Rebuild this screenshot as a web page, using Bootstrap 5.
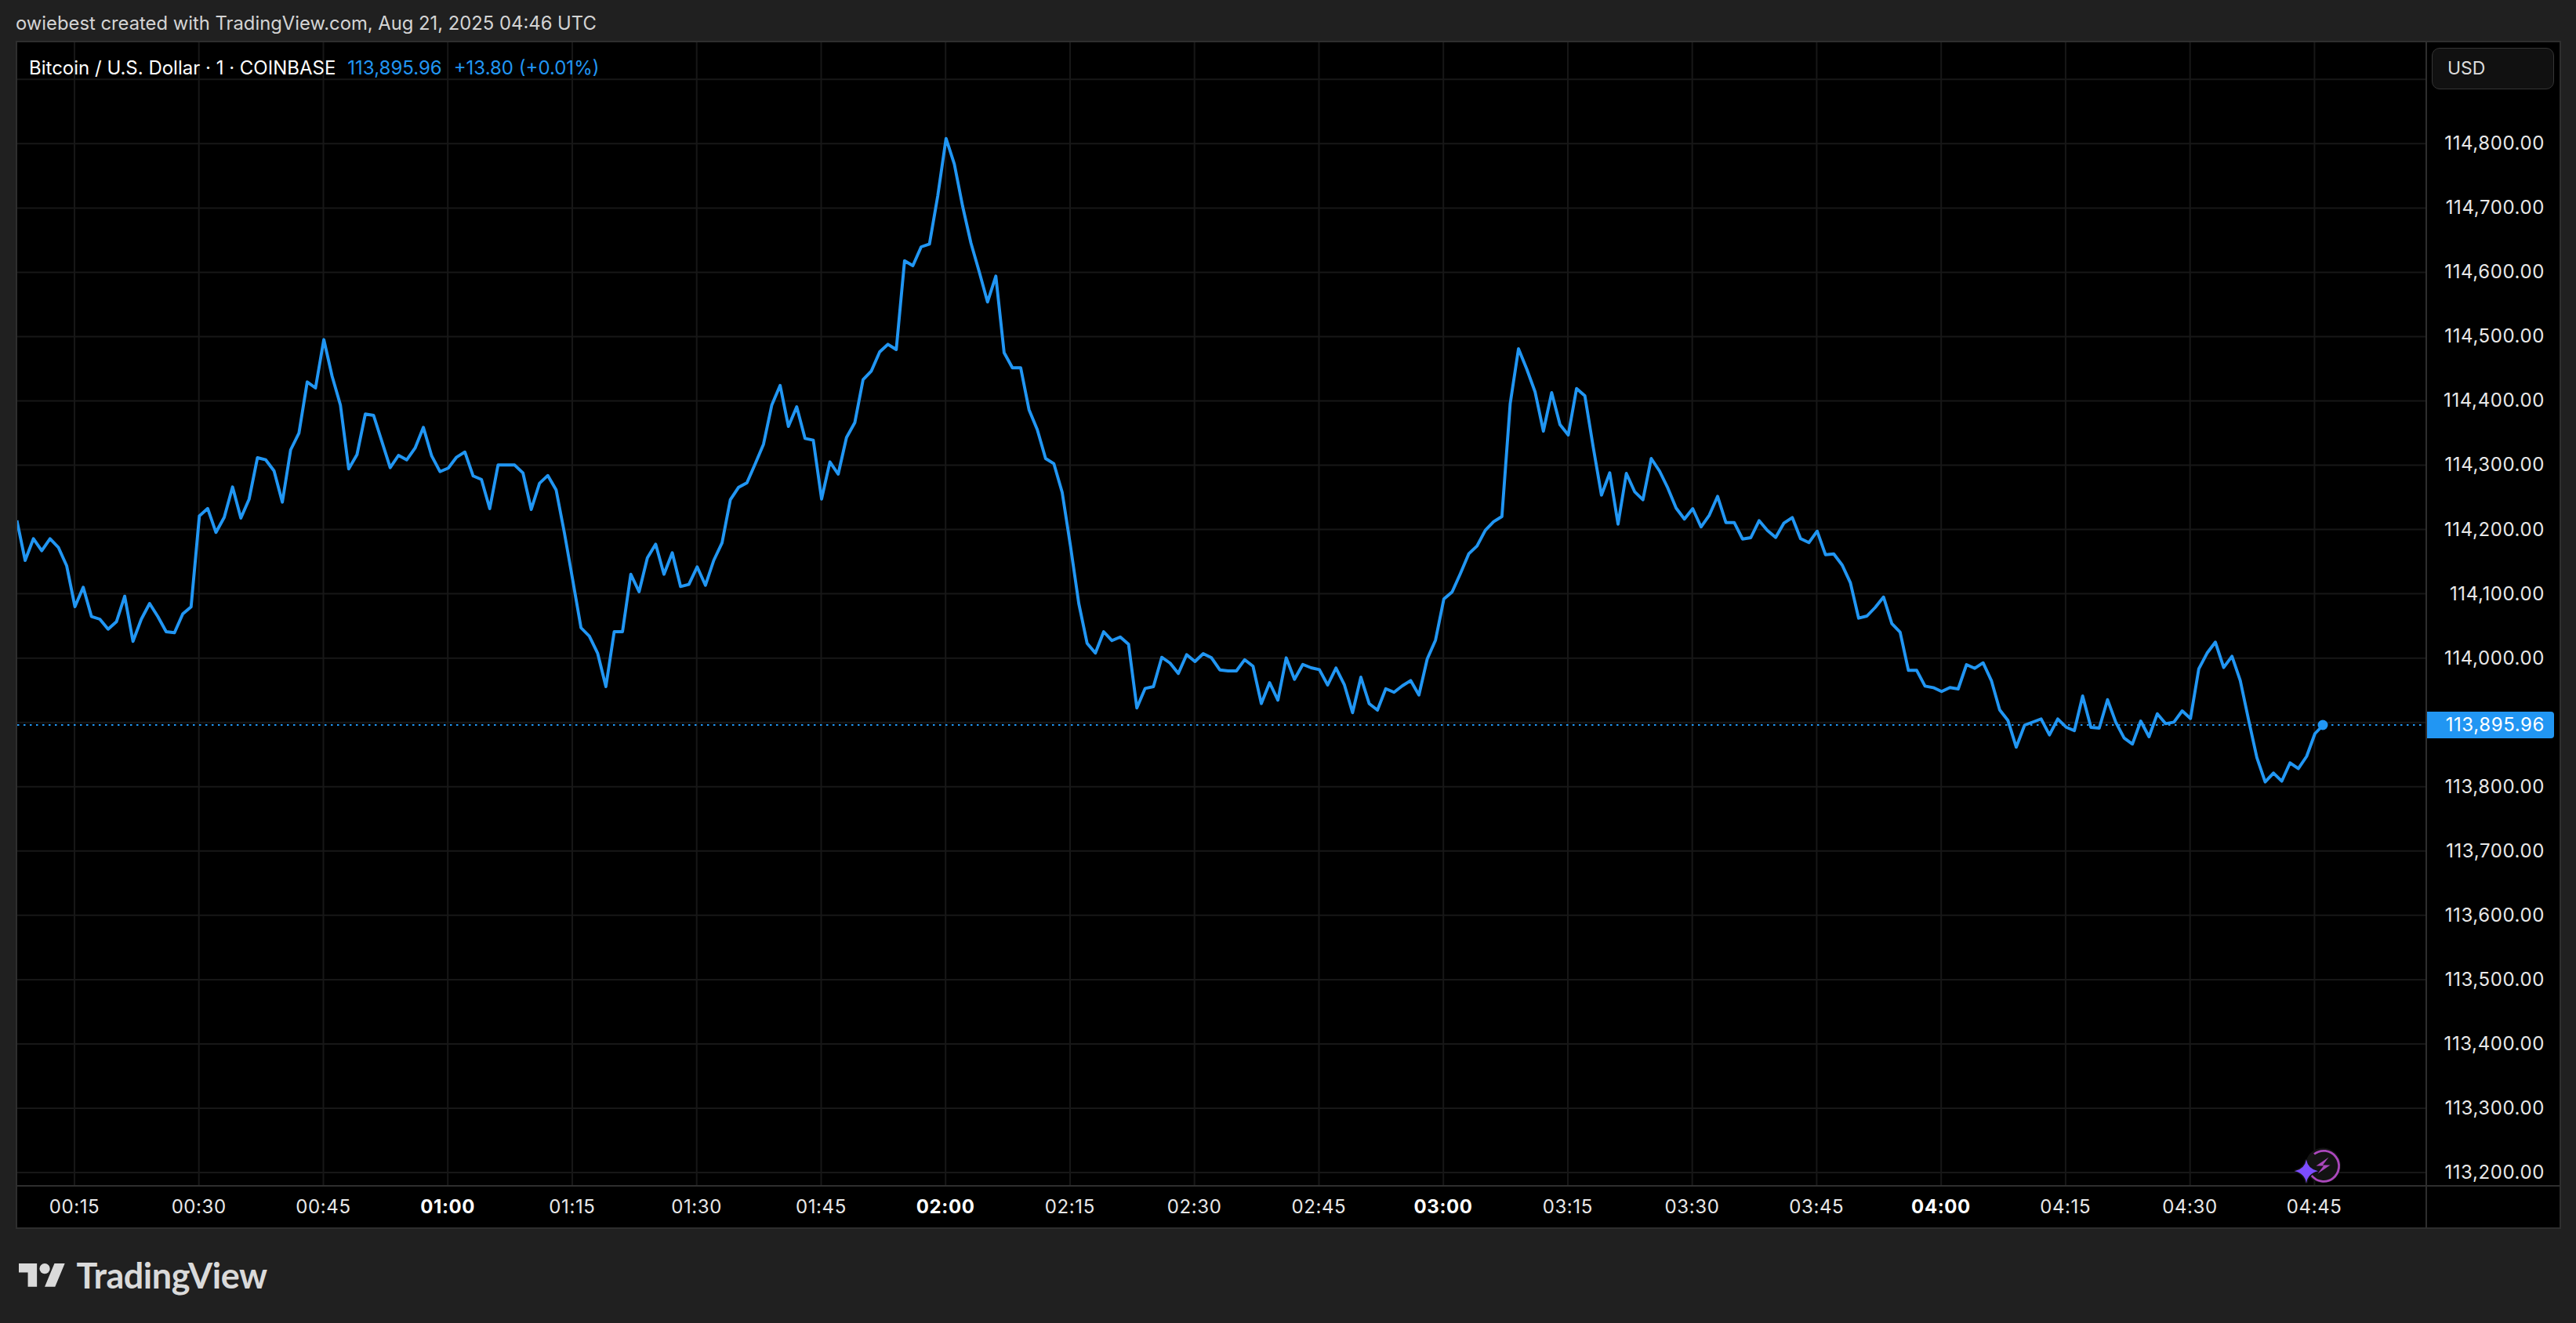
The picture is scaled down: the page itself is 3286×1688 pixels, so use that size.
<!DOCTYPE html>
<html lang="en">
<head>
<meta charset="utf-8">
<title>Bitcoin / U.S. Dollar chart</title>
<link href="https://cdn.jsdelivr.net/npm/bootstrap@5.3.0/dist/css/bootstrap.min.css" rel="stylesheet">
<style>
html,body{margin:0;background:#202020;}
body{width:3286px;height:1688px;overflow:hidden;font-family:Inter,"Liberation Sans",sans-serif;}
.shot-head{height:52px;padding-left:20px;color:#d4d4d4;font-size:23.8px;line-height:1;padding-top:8px;}
.chart-frame{width:3247px;margin-left:20px;border:2px solid #2e2e2e;background:#000;display:grid;grid-template-columns:3072px 171px;grid-template-rows:1458px 54px;}
.chart-pane{overflow:hidden;}
.chart-pane svg{display:block;}
.grid-lines{stroke:#171717;stroke-width:2;fill:none;}
.price-line{fill:none;stroke:#2196f3;stroke-width:3.9;stroke-linejoin:round;}
.last-line{stroke:#2196f3;stroke-width:2.2;stroke-dasharray:2.5 5.5;}
.legend-bar{left:15px;top:20px;font-size:24px;line-height:1.1;color:#fff;gap:15px;}
.legend-blue{color:#2196f3;}
.price-axis{border-left:2px solid #2e2e2e;overflow:hidden;}
.unit-btn{flex:none;width:156px;height:53px;margin:7px 7px 28.3px 6px;background:#111;border:1px solid #353535;border-radius:10px;color:#dcdcdc;font-size:23px;padding-left:19px;}
.price-row{flex:none;height:82.04px;padding-right:19px;color:#e8e8e8;font-size:24px;letter-spacing:.6px;}
.price-tag{flex:none;width:calc(100% + 12px);height:34px;margin-top:6.6px;padding-right:12px;background:#2196f3;color:#fff;border-radius:0 4px 4px 0;}
.time-axis{border-top:2px solid #2e2e2e;overflow:hidden;}
.time-track{margin-left:-6.4px;}
.time-cell{width:158.745px;flex:none;color:#e8e8e8;font-size:24px;letter-spacing:.6px;text-align:center;}
.time-cell.strong{font-weight:700;color:#fff;}
.axis-corner{border-top:2px solid #2e2e2e;border-left:2px solid #2e2e2e;}
.brand-foot{padding:44px 0 0 24px;color:#dadada;gap:14px;}
.brand-name{font-family:Lato,"Liberation Sans",sans-serif;font-weight:700;font-size:45px;line-height:30px;letter-spacing:-.5px;}
</style>
</head>
<body>
<header class="shot-head d-flex align-items-center">owiebest created with TradingView.com, Aug 21, 2025 04:46 UTC</header>
<main class="chart-frame">
  <section class="chart-pane position-relative">
    <div class="legend-bar position-absolute d-flex"><span>Bitcoin / U.S. Dollar · 1 · COINBASE</span><span class="legend-blue">113,895.96</span><span class="legend-blue">+13.80 (+0.01%)</span></div>
    <svg width="3072" height="1458" viewBox="22 54 3072 1458" xmlns="http://www.w3.org/2000/svg">
      <path class="grid-lines" d="M95 54V1512M253.7 54V1512M412.5 54V1512M571.2 54V1512M730 54V1512M888.7 54V1512M1047.5 54V1512M1206.2 54V1512M1365 54V1512M1523.7 54V1512M1682.5 54V1512M1841.2 54V1512M2000 54V1512M2158.7 54V1512M2317.4 54V1512M2476.2 54V1512M2634.9 54V1512M2793.7 54V1512M2952.4 54V1512M22 101.3H3094M22 183.3H3094M22 265.4H3094M22 347.4H3094M22 429.5H3094M22 511.5H3094M22 593.5H3094M22 675.6H3094M22 757.6H3094M22 839.7H3094M22 921.7H3094M22 1003.7H3094M22 1085.8H3094M22 1167.8H3094M22 1249.9H3094M22 1331.9H3094M22 1413.9H3094M22 1496H3094"/>
      <line class="last-line" x1="22" y1="925" x2="3094" y2="925"/>
      <polyline class="price-line" vector-effect="non-scaling-stroke" transform="translate(21.5 0) scale(10.583 1)" points="0,664 1,715 2,687.3 3,702.7 4,687.3 5,698.3 6,721.7 7,774 8,749.3 9,786.7 10,790 11,802.7 12,793.3 13,760.7 14,818.3 15,790 16,770 17,786.7 18,806 19,807.3 20,783.3 21,774.3 22,658.3 23,648.7 24,679.3 25,660 26,621.3 27,661 28,636.7 29,584 30,586.7 31,600.7 32,640.7 33,574 34,552.7 35,487.3 36,495 37,433.3 38,480 39,516.7 40,598.3 41,580 42,528.3 43,530 44,563.3 45,596.7 46,581 47,586.7 48,571.7 49,545.3 50,581.7 51,601.7 52,597.3 53,583.3 54,576.7 55,607.3 56,611.7 57,649 58,593.3 59,593.3 60,593.3 61,603.3 62,650 63,616.7 64,606.7 65,625 66,680 67,740 68,801 69,811.7 70,833.3 71,876 72,806 73,806 74,732.7 75,755 76,711.7 77,694.3 78,732.7 79,705.3 80,748.3 81,745.7 82,723.3 83,746.7 84,715 85,692.7 86,637.7 87,621.7 88,616 89,591.7 90,566.7 91,516.7 92,491.7 93,544 94,519 95,559.3 96,561.7 97,636.7 98,589.3 99,605 100,558.3 101,539.3 102,484.3 103,473.3 104,449 105,439.3 106,446 107,332.7 108,339 109,315 110,311.3 111,250 112,176.7 113,209.3 114,263.3 115,310 116,346.7 117,385.3 118,352.3 119,450 120,469.3 121,469.3 122,522.7 123,548.3 124,585 125,591.7 126,628.3 127,696.7 128,770 129,820.7 130,833.3 131,806 132,817.3 133,812.7 134,822 135,903.3 136,878.3 137,876 138,838.7 139,846 140,859.3 141,835.3 142,844 143,834 144,839.3 145,854.7 146,856 147,856 148,841.7 149,850 150,897.7 151,871 152,893.3 153,839.3 154,866.7 155,847.7 156,852 157,854.3 158,874 159,852.3 160,873.3 161,909.3 162,864 163,897.7 164,906 165,878.7 166,883.3 167,875 168,868.3 169,886.7 170,840.7 171,816.7 172,764.3 173,755.3 174,731.7 175,706.7 176,696.7 177,676.7 178,665.7 179,659 180,515 181,445 182,471 183,500 184,550 185,501 186,541.7 187,555 188,495.7 189,505 190,570 191,631.7 192,603.3 193,668.7 194,604 195,627.3 196,637.7 197,585 198,601 199,622.7 200,648.3 201,662.3 202,649 203,672.3 204,657.3 205,633.3 206,666.7 207,666.7 208,687.7 209,686 210,664.3 211,676.7 212,685.7 213,667.3 214,660.3 215,687.3 216,692.3 217,677.7 218,707.7 219,706.7 220,720.7 221,743.3 222,788.7 223,786 224,775 225,761.7 226,795.7 227,806.7 228,855.3 229,855.3 230,875.3 231,877.3 232,882.3 233,877.3 234,879 235,848 236,852.7 237,845.7 238,868.3 239,905.7 240,919.3 241,953.3 242,925.3 243,921.3 244,917.3 245,937.7 246,917.3 247,927.7 248,932.3 249,888 250,928 251,929 252,892.7 253,921.7 254,941.7 255,949.3 256,920 257,940 258,910.7 259,923.3 260,921.3 261,907 262,916.7 263,853.3 264,833.3 265,819.3 266,851.7 267,837.3 268,868.3 269,918.3 270,966.7 271,997.7 272,986.3 273,996.7 274,973.3 275,980.7 276,965 277,936 278,925"/>
      <circle cx="2963" cy="925" r="6.5" fill="#2196f3"/>
      <circle cx="2963.3" cy="1487" r="22.5" fill="#131313"/>
      <path d="M2952 1472.5A19.5 19.5 0 1 1 2948.5 1499.5" fill="none" stroke="#ab47bc" stroke-width="2.8"/>
      <path d="M2970.5 1476.5L2954.5 1487.5H2964L2956.5 1497.5L2972.5 1486.5H2963Z" fill="#ab47bc"/>
      <path d="M2942 1479.5Q2944 1491.5 2957 1494.3Q2944 1497 2942 1509.5Q2940 1497 2927 1494.3Q2940 1491.5 2942 1479.5Z" fill="#7c4dff" stroke="#131313" stroke-width="3" paint-order="stroke"/>
    </svg>
  </section>
  <aside class="price-axis d-flex flex-column">
    <div class="unit-btn d-flex align-items-center">USD</div>
    <div class="price-row d-flex align-items-center justify-content-end">114,800.00</div>
    <div class="price-row d-flex align-items-center justify-content-end">114,700.00</div>
    <div class="price-row d-flex align-items-center justify-content-end">114,600.00</div>
    <div class="price-row d-flex align-items-center justify-content-end">114,500.00</div>
    <div class="price-row d-flex align-items-center justify-content-end">114,400.00</div>
    <div class="price-row d-flex align-items-center justify-content-end">114,300.00</div>
    <div class="price-row d-flex align-items-center justify-content-end">114,200.00</div>
    <div class="price-row d-flex align-items-center justify-content-end">114,100.00</div>
    <div class="price-row d-flex align-items-center justify-content-end">114,000.00</div>
    <div class="price-row d-flex align-items-center"><div class="price-tag d-flex align-items-center justify-content-end">113,895.96</div></div>
    <div class="price-row d-flex align-items-center justify-content-end">113,800.00</div>
    <div class="price-row d-flex align-items-center justify-content-end">113,700.00</div>
    <div class="price-row d-flex align-items-center justify-content-end">113,600.00</div>
    <div class="price-row d-flex align-items-center justify-content-end">113,500.00</div>
    <div class="price-row d-flex align-items-center justify-content-end">113,400.00</div>
    <div class="price-row d-flex align-items-center justify-content-end">113,300.00</div>
    <div class="price-row d-flex align-items-center justify-content-end">113,200.00</div>
  </aside>
  <div class="time-axis d-flex align-items-center">
    <div class="time-track d-flex">
      <span class="time-cell">00:15</span><span class="time-cell">00:30</span><span class="time-cell">00:45</span><span class="time-cell strong">01:00</span><span class="time-cell">01:15</span><span class="time-cell">01:30</span><span class="time-cell">01:45</span><span class="time-cell strong">02:00</span><span class="time-cell">02:15</span><span class="time-cell">02:30</span><span class="time-cell">02:45</span><span class="time-cell strong">03:00</span><span class="time-cell">03:15</span><span class="time-cell">03:30</span><span class="time-cell">03:45</span><span class="time-cell strong">04:00</span><span class="time-cell">04:15</span><span class="time-cell">04:30</span><span class="time-cell">04:45</span>
    </div>
  </div>
  <div class="axis-corner"></div>
</main>
<footer class="brand-foot d-flex align-items-center">
  <svg width="59.5" height="29.8" viewBox="0 4 36 18" fill="currentColor" xmlns="http://www.w3.org/2000/svg"><path d="M14 22H7V11H0V4h14v18zM28 22h-8l7.5-18h8L28 22z"/><circle cx="20" cy="8" r="4"/></svg>
  <span class="brand-name">TradingView</span>
</footer>
<script src="https://cdn.jsdelivr.net/npm/bootstrap@5.3.0/dist/js/bootstrap.bundle.min.js"></script>
</body>
</html>
